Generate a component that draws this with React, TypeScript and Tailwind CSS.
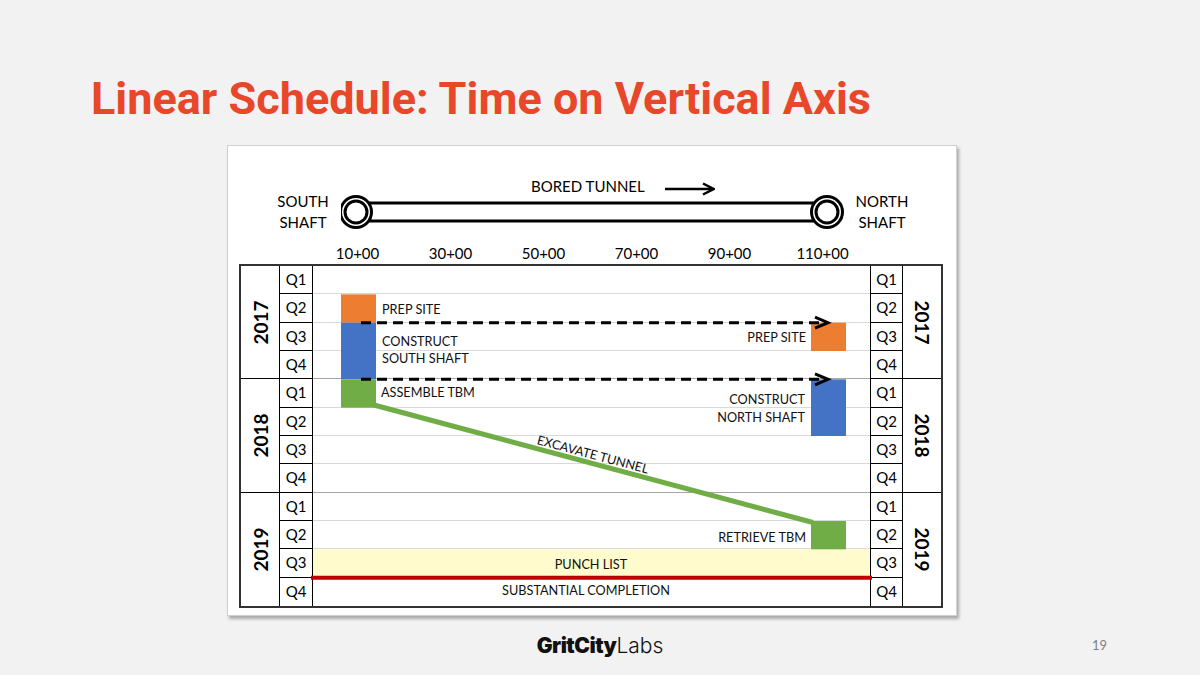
import React from "react";

const ROW = 340 / 12;

function QCol({ side }: { side: "l" | "r" }) {
  const qs = ["Q1", "Q2", "Q3", "Q4"];
  const cells: string[] = [];
  for (let y = 0; y < 3; y++) for (const q of qs) cells.push(q);
  return (
    <div
      className={
        side === "l"
          ? "w-[33px] border-r border-black flex flex-col"
          : "w-[33px] border-l border-r border-black flex flex-col"
      }
    >
      {cells.map((q, i) => (
        <div
          key={i}
          className={
            i < 11
              ? "h-[28.333px] border-b border-black flex items-center justify-center text-[15px] leading-none"
              : "h-[28.333px] flex items-center justify-center text-[15px] leading-none"
          }
        >
          {q}
        </div>
      ))}
    </div>
  );
}

function YearCol({ side }: { side: "l" | "r" }) {
  const years = ["2017", "2018", "2019"];
  return (
    <div
      className={
        side === "l"
          ? "w-[39px] border-r border-black flex flex-col"
          : "w-[38px] flex flex-col"
      }
    >
      {years.map((y, i) => (
        <div
          key={y}
          className={
            i < 2
              ? "h-[113.333px] border-b border-black flex items-center justify-center"
              : "h-[113.333px] flex items-center justify-center"
          }
        >
          <span
            className={
              side === "l"
                ? "-rotate-90 font-bold text-[19px] leading-none whitespace-nowrap"
                : "rotate-90 font-bold text-[19px] leading-none whitespace-nowrap"
            }
          >
            {y}
          </span>
        </div>
      ))}
    </div>
  );
}

function MainArea() {
  const rows = Array.from({ length: 12 }, (_, i) => i);
  const y = (k: number) => k * ROW;
  const c = (k: number) => (k + 0.5) * ROW;
  return (
    <div className="relative w-[557px] flex flex-col">
      {rows.map((i) => (
        <div
          key={i}
          className={
            i === 11
              ? "h-[28.333px]"
              : i === 3 || i === 7
              ? "h-[28.333px] border-b border-[#a6a6a6]"
              : "h-[28.333px] border-b border-[#d9d9d9]"
          }
        />
      ))}
      <svg
        className="absolute left-0 top-0 overflow-visible"
        width={557}
        height={340}
        viewBox="0 0 557 340"
        fontFamily="Lato, sans-serif"
      >
        {/* punch list band */}
        <rect x={0} y={y(10)} width={557} height={ROW} fill="#fffbcc" />
        {/* left bars */}
        <rect x={28} y={y(1)} width={35} height={ROW} fill="#ed7d31" />
        <rect x={28} y={y(2)} width={35} height={ROW * 2} fill="#4472c4" />
        <rect x={28} y={y(4)} width={35} height={ROW} fill="#70ad47" />
        {/* right bars */}
        <rect x={498} y={y(2)} width={35} height={ROW} fill="#ed7d31" />
        <rect x={498} y={y(4)} width={35} height={ROW * 2} fill="#4472c4" />
        <rect x={498} y={y(9)} width={35} height={ROW} fill="#70ad47" />
        {/* excavate line */}
        <line x1={61} y1={139} x2={500} y2={256.5} stroke="#70ad47" strokeWidth={5} />
        {/* dashed arrows */}
        <line x1={48} y1={y(2)} x2={513} y2={y(2)} stroke="#000" strokeWidth={3} strokeDasharray="10 6" />
        <polyline points={`502,${y(2) - 5.5} 515,${y(2)} 502,${y(2) + 5.5}`} fill="none" stroke="#000" strokeWidth={3} />
        <line x1={48} y1={y(4)} x2={513} y2={y(4)} stroke="#000" strokeWidth={3} strokeDasharray="10 6" />
        <polyline points={`502,${y(4) - 5.5} 515,${y(4)} 502,${y(4) + 5.5}`} fill="none" stroke="#000" strokeWidth={3} />
        {/* red completion line */}
        <line x1={-2} y1={y(11)} x2={559} y2={y(11)} stroke="#c00000" strokeWidth={4} />
        {/* labels */}
        <g fontSize={12.7} fill="#111" dominantBaseline="central">
          <text x={69} y={c(1)}>PREP SITE</text>
          <text x={69} y={75}>CONSTRUCT</text>
          <text x={69} y={92}>SOUTH SHAFT</text>
          <text x={68} y={126}>ASSEMBLE TBM</text>
          <text x={493} y={71} textAnchor="end">PREP SITE</text>
          <text x={492} y={133} textAnchor="end">CONSTRUCT</text>
          <text x={492} y={151} textAnchor="end">NORTH SHAFT</text>
          <text x={493} y={271} textAnchor="end">RETRIEVE TBM</text>
          <text x={278} y={c(10)} textAnchor="middle">PUNCH LIST</text>
          <text x={273} y={324} textAnchor="middle">SUBSTANTIAL COMPLETION</text>
          <text x={280} y={188} textAnchor="middle" transform="rotate(15 280 188)">EXCAVATE TUNNEL</text>
        </g>
      </svg>
    </div>
  );
}

export default function App() {
  const stations = ["10+00", "30+00", "50+00", "70+00", "90+00", "110+00"];
  return (
    <div className="w-[1200px] h-[675px] bg-[#f2f2f2] overflow-hidden">
      <div className="h-[145px] pl-[91px] pt-[76px]">
        <h1 className="font-[Roboto,sans-serif] font-bold text-[45px] leading-none text-[#e9472a] whitespace-nowrap">
          Linear Schedule: Time on Vertical Axis
        </h1>
      </div>

      <div className="ml-[227px] w-[730px] h-[471px] bg-white border border-[#d0d0d0] shadow-[2px_3px_3px_rgba(0,0,0,0.3)] font-[Lato,sans-serif] text-black">
        {/* header row 1 */}
        <div className="pt-[33px]">
          <div className="flex items-center h-[14px] pl-[303px]">
            <span className="text-[15px] leading-none whitespace-nowrap">BORED TUNNEL</span>
            <svg className="ml-[20px] mt-[5px]" width={50} height={14} viewBox="0 0 50 14">
              <line x1={0} y1={7} x2={48} y2={7} stroke="#000" strokeWidth={2.5} />
              <polyline points="38,1.5 48.5,7 38,12.5" fill="none" stroke="#000" strokeWidth={2.5} />
            </svg>
          </div>
        </div>
        {/* header row 2 */}
        <div className="flex items-center h-[38px] pl-[37px]">
          <div className="w-[76px] text-center text-[15px] leading-[21px]">
            SOUTH
            <br />
            SHAFT
          </div>
          <svg width={505} height={38} viewBox="0 0 505 38">
            <line x1={28} y1={10} x2={473} y2={10} stroke="#000" strokeWidth={3} />
            <line x1={28} y1={28} x2={473} y2={28} stroke="#000" strokeWidth={3} />
            <circle cx={15} cy={19} r={15.5} fill="#fff" stroke="#000" strokeWidth={3} />
            <circle cx={15} cy={19} r={11} fill="#fff" stroke="#000" strokeWidth={3} />
            <circle cx={486} cy={19} r={15.5} fill="#fff" stroke="#000" strokeWidth={3} />
            <circle cx={486} cy={19} r={11} fill="#fff" stroke="#000" strokeWidth={3} />
          </svg>
          <div className="w-[72px] text-center text-[15px] leading-[21px]">
            NORTH
            <br />
            SHAFT
          </div>
        </div>
        {/* stations */}
        <div className="mt-[12px] h-[20px] flex pl-[83px]">
          {stations.map((s) => (
            <div key={s} className="w-[93px] text-center text-[15px] leading-[20px]">
              {s}
            </div>
          ))}
        </div>
        {/* grid */}
        <div className="mt-[1px] ml-[11px] w-[704px] h-[344px] border-2 border-[#333] flex">
          <YearCol side="l" />
          <QCol side="l" />
          <MainArea />
          <QCol side="r" />
          <YearCol side="r" />
        </div>
      </div>

      <div className="grid grid-cols-[1fr_auto_1fr] items-center h-[59px]">
        <div />
        <div className="font-[Inter,sans-serif] text-[21px] leading-none text-[#111] whitespace-nowrap">
          <span className="font-black tracking-[-0.5px]">GritCity</span>
          <span className="font-light">Labs</span>
        </div>
        <div className="justify-self-end pr-[93px] font-[Lato,sans-serif] text-[13px] text-[#7f7f7f]">19</div>
      </div>
    </div>
  );
}
